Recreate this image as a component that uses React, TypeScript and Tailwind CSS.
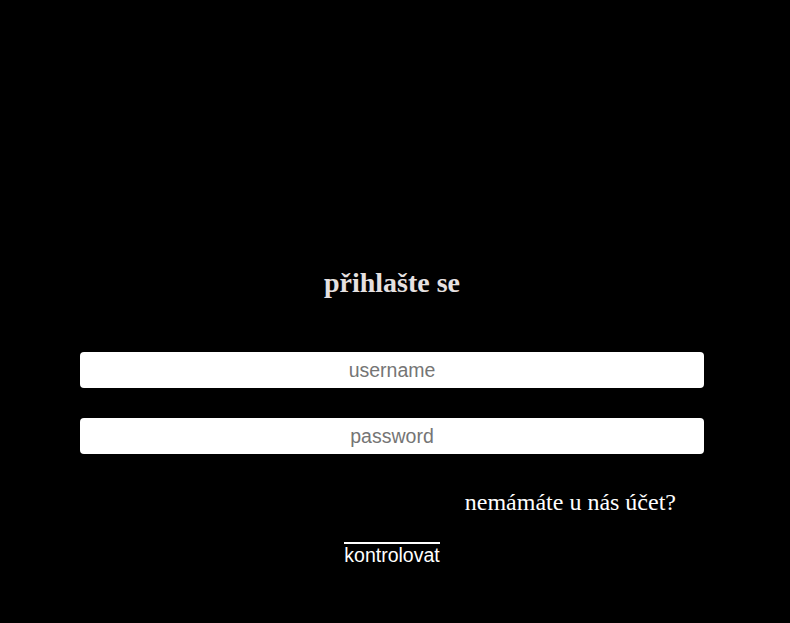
import React from 'react';

const App: React.FC = () => {
  return (
    <div className="min-h-screen w-full bg-black">
      <div className="w-[784px] pt-[266px] flex flex-col items-center">
        {/* Nadpis */}
        <h1 className="text-[28px] leading-[34px] font-bold text-[#e6e1e1] font-['Liberation_Serif',serif]">
          přihlašte se
        </h1>

        {/* Formulář */}
        <form className="w-[624px] mt-[52px] flex flex-col gap-[30px]">
          <input
            type="text"
            placeholder="username"
            className="h-[36px] w-full rounded-[4px] bg-white text-center text-[19.5px] text-black placeholder:text-[#757575] outline-none font-['Liberation_Sans',sans-serif]"
          />
          <input
            type="password"
            placeholder="password"
            className="h-[36px] w-full rounded-[4px] bg-white text-center text-[19.5px] text-black placeholder:text-[#757575] outline-none font-['Liberation_Sans',sans-serif]"
          />
        </form>

        <div className="w-[624px] mt-[34px] flex justify-end pr-[28px]">
          <a className="text-[24px] leading-[28px] text-white font-['Liberation_Serif',serif]">
            nemámáte u nás účet?
          </a>
        </div>

        <button className="mt-[26px] border-t-2 border-white text-[19.5px] leading-[22px] text-white font-['Liberation_Sans',sans-serif]">
          kontrolovat
        </button>
      </div>
    </div>
  );
};

export default App;
